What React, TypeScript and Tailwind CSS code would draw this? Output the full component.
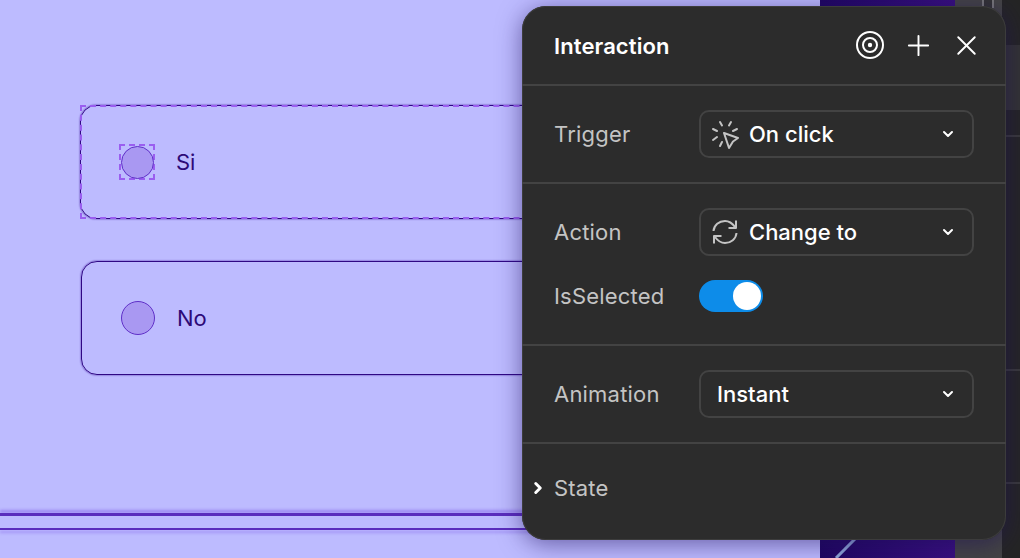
import { ChevronDown, ChevronRight, Plus, X } from 'lucide-react'

const font = { fontFamily: 'Inter, "Liberation Sans", sans-serif' }

function TargetIcon() {
  return (
    <svg width="30" height="30" viewBox="0 0 30 30" fill="none" stroke="#fff" strokeWidth="2">
      <circle cx="15" cy="15" r="13" />
      <circle cx="15" cy="15" r="7" />
      <circle cx="15" cy="15" r="2.2" fill="#fff" stroke="none" />
    </svg>
  )
}

function ClickIcon() {
  return (
    <svg width="30" height="30" viewBox="0 0 30 30" fill="none" stroke="#c4c4c4" strokeWidth="2" strokeLinecap="round" strokeLinejoin="round">
      <path d="M14 14 L28 19 L23 22.5 L19 29 Z" />
      <path d="M10 3 L12 6.5" />
      <path d="M21 3 L19 6.5" />
      <path d="M3 10 L7 12" />
      <path d="M3 21 L7 18" />
      <path d="M10 27 L12 23" />
      <path d="M27 10 L23 12" />
    </svg>
  )
}

function SyncIcon() {
  return (
    <svg width="26" height="26" viewBox="0 0 26 26" fill="none" stroke="#c4c4c4" strokeWidth="2" strokeLinejoin="round">
      <path d="M1.5 12 C2 6 7 2 13 2 C17.5 2 20.5 4.5 23 8" />
      <path d="M24 1.5 V9 H16.5" />
      <path d="M24.5 14 C24 20 19 24 13 24 C8.5 24 5.5 21.5 3 18" />
      <path d="M2 24.5 V17 H9.5" />
    </svg>
  )
}

function Select({ icon, label }: { icon?: React.ReactNode; label: string }) {
  return (
    <div className="flex h-12 w-[275px] items-center rounded-[10px] border-2 border-[#434343] pr-4 text-[22px] font-medium text-white">
      {icon ? <span className="flex w-12 shrink-0 items-center justify-center">{icon}</span> : <span className="w-4 shrink-0" />}
      <span className="flex-1 leading-none">{label}</span>
      <ChevronDown size={16} strokeWidth={3} className="text-white" />
    </div>
  )
}

function Label({ children }: { children: string }) {
  return <span className="w-[145px] leading-none tracking-[0.2px] text-[#c4c4c4]">{children}</span>
}

export default function App() {
  return (
    <div className="relative flex h-[558px] w-[1020px] overflow-hidden bg-[#bdbbff]" style={font}>
      {/* canvas */}
      <div className="flex w-[820px] shrink-0 flex-col pt-[105px]">
        <div className="relative ml-20 flex h-[114px] w-[500px] items-center rounded-[16px] border border-[#2f0884] pl-[38px] shadow-[0_0_2px_#3f149c]">
          {/* selection marquee sits on top of the card edge */}
          <span className="absolute -inset-px border-2 border-dashed border-[#9a5ef0]" />
          <span className="flex size-9 items-center justify-center border-2 border-dashed border-[#9a5ef0]">
            <span className="size-[33px] shrink-0 rounded-full border border-[#5f2fc8] bg-[#a998f2]" />
          </span>
          <span className="ml-[21px] text-[22px] leading-none text-[#2d0a78]">Si</span>
        </div>
        <div className="ml-[81px] mt-[42px] flex h-[114px] w-[500px] items-center rounded-[16px] border border-[#2f0884] pl-[39px] shadow-[0_0_2px_#3f149c]">
          <span className="size-[34px] rounded-full border border-[#5f2fc8] bg-[#a998f2]" />
          <span className="ml-[22px] text-[22px] leading-none text-[#2d0a78]">No</span>
        </div>
        <div className="mt-[138px] h-[3px] bg-[#5a2dbd] shadow-[0_-3px_3px_rgba(120,80,230,0.5)]" />
        <div className="mt-3 h-[2px] bg-[#5a2dbd] shadow-[0_3px_3px_rgba(120,80,230,0.4)]" />
      </div>

      {/* right strip behind the panel */}
      <div className="relative w-[135px] shrink-0 bg-gradient-to-r from-[#1f0660] to-[#380f7e]">
        <svg className="absolute bottom-0 left-0" width="50" height="20" viewBox="0 0 50 20" fill="none">
          <path d="M36 0 L16 20" stroke="#8fa6d8" strokeWidth="3" />
        </svg>
      </div>
      <div className="flex w-[47px] shrink-0 flex-col bg-[#444]">
        <div className="ml-[27px] h-2 w-3 border-x-2 border-[#777] bg-[#333]" />
      </div>
      <div className="flex flex-1 flex-col bg-[#252525]">
        <div className="mt-[45px] h-[65px] bg-[#333]" />
        <div className="mt-[25px] h-[2px] bg-[#3a3a3a]" />
        <div className="mt-[232px] h-[2px] bg-[#3a3a3a]" />
        <div className="mt-[111px] h-[2px] bg-[#3a3a3a]" />
      </div>

      {/* interaction panel */}
      <div className="absolute left-[522px] top-[6px] flex h-[534px] w-[484px] flex-col rounded-[24px] bg-[#2c2c2c] text-[22px] shadow-[inset_0_0_0_1px_#3c3c3c,0_4px_24px_rgba(30,15,90,0.55)]">
        <div className="flex h-[80px] shrink-0 items-center border-b-2 border-[#434343] pl-8 pr-[23px]">
          <span className="flex-1 pt-[2px] font-semibold leading-none tracking-[0.1px] text-white">Interaction</span>
          <div className="flex items-center gap-[15px]">
            <span className="mr-[2px] flex">
              <TargetIcon />
            </span>
            <Plus size={33} strokeWidth={1.4} className="text-white" />
            <X size={33} strokeWidth={1.4} className="text-white" />
          </div>
        </div>

        <div className="flex h-[98px] shrink-0 items-center border-b-2 border-[#434343] pl-8">
          <Label>Trigger</Label>
          <Select icon={<ClickIcon />} label="On click" />
        </div>

        <div className="flex h-[162px] shrink-0 flex-col gap-6 border-b-2 border-[#434343] pl-8 pt-6">
          <div className="flex items-center">
            <Label>Action</Label>
            <Select icon={<SyncIcon />} label="Change to" />
          </div>
          <div className="flex items-center">
            <Label>IsSelected</Label>
            <span className="flex h-8 w-16 items-center justify-end rounded-full bg-[#0d8ce9] pr-[2px]">
              <span className="size-7 rounded-full bg-white" />
            </span>
          </div>
        </div>

        <div className="flex h-[98px] shrink-0 items-center border-b-2 border-[#434343] pl-8">
          <Label>Animation</Label>
          <Select label="Instant" />
        </div>

        <div className="flex flex-1 items-center pb-2 pl-[7px]">
          <ChevronRight size={18} strokeWidth={4} className="text-white" />
          <span className="ml-[7px] leading-none tracking-[0.2px] text-[#c4c4c4]">State</span>
        </div>
      </div>
    </div>
  )
}
